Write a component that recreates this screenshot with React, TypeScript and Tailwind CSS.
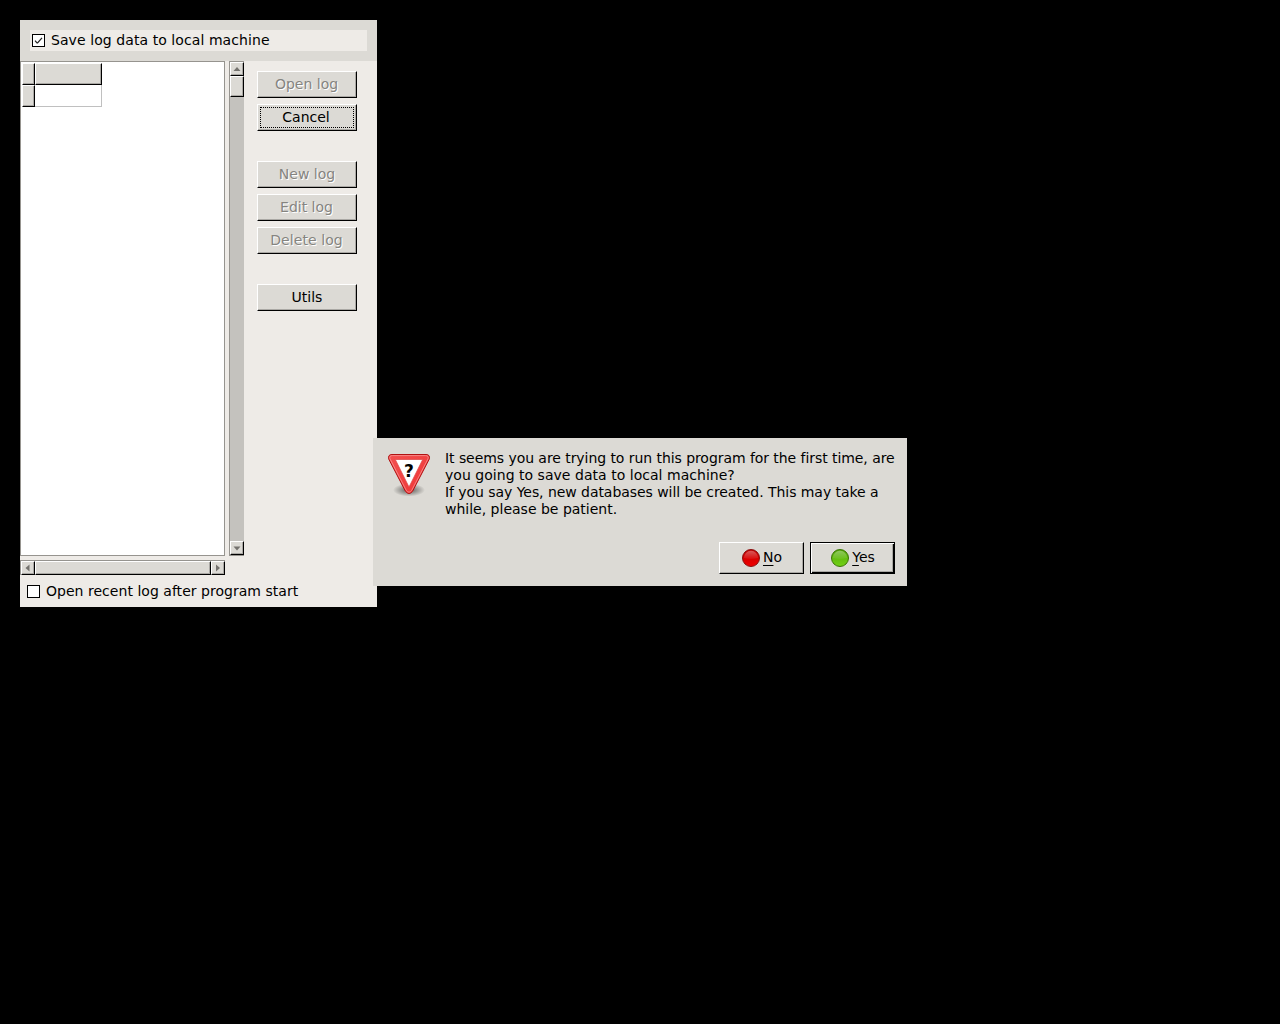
import type { ReactNode } from "react";

const raised =
  "border border-t-white border-l-white border-r-black border-b-black bg-[#dcdad5] shadow-[inset_-1px_-1px_0_#aaa8a4]";

function SideButton({ label, disabled = false, focused = false, className = "", textClass = "" }: { label: string; disabled?: boolean; focused?: boolean; className?: string; textClass?: string }) {
  return (
    <button
      disabled={disabled}
      className={`flex h-[27px] w-[100px] shrink-0 p-[2px] ${raised} ${className}`}
    >
      <span
        className={`flex h-full w-full items-center justify-center border border-dotted leading-[17px] ${focused ? "border-black" : "border-transparent"} ${disabled ? "text-[#858480] [text-shadow:1px_1px_0_#fff]" : "text-black"} ${textClass}`}
      >
        {label}
      </span>
    </button>
  );
}

function Arrow({ points, className = "" }: { points: string; className?: string }) {
  return (
    <span className={`flex h-[14px] w-[14px] shrink-0 items-center justify-center ${raised} ${className}`}>
      <svg width="8" height="8" viewBox="0 0 8 8">
        <polygon points={points} fill="#74726e" />
      </svg>
    </span>
  );
}

function Check({ checked = false }: { checked?: boolean }) {
  return (
    <span className="flex h-[13px] w-[13px] shrink-0 items-center justify-center border border-black bg-white">
      {checked && (
        <svg width="9" height="9" viewBox="0 0 9 9">
          <path d="M1 4.6 L3 7 L3.6 7 L8 1.8" fill="none" stroke="#222" strokeWidth="1.2" />
        </svg>
      )}
    </span>
  );
}

function Ball({ id, light, dark, rim }: { id: string; light: string; dark: string; rim: string }) {
  return (
    <svg width="20" height="20" viewBox="0 0 20 20" className="shrink-0">
      <defs>
        <linearGradient id={id} x1="0" y1="0" x2="0" y2="1">
          <stop offset="0" stopColor={dark} />
          <stop offset="1" stopColor={light} />
        </linearGradient>
        <linearGradient id={id + "g"} x1="0" y1="0" x2="0" y2="1">
          <stop offset="0" stopColor="#fff" stopOpacity="0.35" />
          <stop offset="1" stopColor="#fff" stopOpacity="0.05" />
        </linearGradient>
      </defs>
      <circle cx="10" cy="10" r="8.5" fill={`url(#${id})`} stroke={rim} strokeWidth="1" />
      <path d="M2.8 10 A7.2 7.2 0 0 1 17.2 10 Q10 11.8 2.8 10Z" fill={`url(#${id}g)`} />
    </svg>
  );
}

function DialogButton({ icon, mnemonic, rest, primary = false }: { icon: ReactNode; mnemonic: string; rest: string; primary?: boolean }) {
  return (
    <button
      className={`flex h-[32px] w-[85px] items-center justify-center gap-[2px] ${primary ? "border border-black bg-[#dcdad5] shadow-[inset_1px_1px_0_#fff,inset_-1px_-1px_0_#000,inset_-2px_-2px_0_#aaa8a4]" : raised}`}
    >
      {icon}
      <span className="pb-[2px] leading-[17px]">
        <span className="underline decoration-1 underline-offset-[3px] [text-decoration-skip-ink:none]">{mnemonic}</span>
        {rest}
      </span>
    </button>
  );
}

function WarningIcon() {
  return (
    <svg width="48" height="48" viewBox="0 0 48 48" className="shrink-0">
      <defs>
        <radialGradient id="shade">
          <stop offset="0" stopColor="#000" stopOpacity="0.6" />
          <stop offset="0.5" stopColor="#000" stopOpacity="0.3" />
          <stop offset="1" stopColor="#000" stopOpacity="0" />
        </radialGradient>
        <linearGradient id="sign" x1="0" y1="0" x2="1" y2="1">
          <stop offset="0" stopColor="#f35050" />
          <stop offset="1" stopColor="#ef3535" />
        </linearGradient>
      </defs>
      <ellipse cx="24" cy="40" rx="16" ry="6.5" fill="url(#shade)" />
      <path d="M7 4.5 H41 Q45.4 4.5 44.2 9.2 L27.6 41.2 Q24 45.8 20.4 41.2 L3.8 9.2 Q2.6 4.5 7 4.5Z" fill="url(#sign)" stroke="#b01212" strokeWidth="1" />
      <path d="M7.4 5.6 H40.6 Q44 5.6 43 8.8 L26.6 40.6 Q24 43.8 21.4 40.6 L5 8.8 Q4 5.6 7.4 5.6Z" fill="none" stroke="#f9a0a0" strokeWidth="0.7" />
      <path d="M10.3 9.5 H37.7 L24 37Z" fill="#fff" stroke="#d44" strokeWidth="0.7" strokeLinejoin="round" />
      <text x="24" y="27" textAnchor="middle" fontFamily="DejaVu Sans" fontWeight="700" fontSize="17" fill="#000">?</text>
    </svg>
  );
}

export default function App() {
  return (
    <main className="relative h-[1024px] w-[1280px] overflow-hidden bg-black p-5 text-[14px] leading-[17px] text-black [font-family:'DejaVu_Sans',sans-serif]">
      <section className="flex h-[587px] w-[357px] flex-col bg-[#eeebe7]">
        <header className="h-[41px] bg-[#dcdad5] px-[10px] pt-[10px]">
          <label className="flex h-[21px] items-center gap-[6px] bg-[#eeebe7] pl-[2px]">
            <Check checked />
            <span className="tracking-[0.075px]">Save log data to local machine</span>
          </label>
        </header>
        <div className="flex h-[495px]">
          <div className="w-[205px] border border-[#96948f] bg-white pl-px pt-px">
            <div className="flex h-[22px]">
              <div className={`w-[13px] ${raised}`} />
              <div className={`w-[67px] ${raised}`} />
            </div>
            <div className="flex h-[22px]">
              <div className={`w-[13px] ${raised}`} />
              <div className="w-[67px] border-b border-r border-[#c0c0c0]" />
            </div>
          </div>
          <div className="ml-[4px] flex w-[15px] flex-col border border-r-0 border-[#96948f] bg-[#c4c2be]">
            <Arrow points="0.5,6 7.5,6 4,2" />
            <div className={`h-[21px] w-[14px] ${raised}`} />
            <Arrow points="0.5,2.5 7.5,2.5 4,6.5" className="mt-auto" />
          </div>
          <div className="ml-[13px] flex flex-col gap-[6px] pt-[10px]">
            <SideButton label="Open log" disabled textClass="pr-px" />
            <SideButton label="Cancel" focused textClass="pr-[2px]" />
            <SideButton label="New log" disabled className="mt-6" />
            <SideButton label="Edit log" disabled textClass="pr-px" />
            <SideButton label="Delete log" disabled textClass="pr-px tracking-[0.07px]" />
            <SideButton label="Utils" className="mt-6" />
          </div>
        </div>
        <div className="mt-[4px] flex h-[15px] w-[205px] border-l border-t border-[#96948f] bg-[#c4c2be]">
          <Arrow points="5.5,0.5 5.5,7.5 1.5,4" />
          <div className={`h-[14px] flex-1 ${raised}`} />
          <Arrow points="2,0.5 2,7.5 6,4" />
        </div>
        <label className="mt-[8px] flex items-center gap-[6px] pl-[7px]">
          <Check />
          <span className="tracking-[0.03px]">Open recent log after program start</span>
        </label>
      </section>

      <section role="dialog" className="absolute left-[373px] top-[438px] flex h-[148px] w-[534px] flex-col bg-[#dcdad5] px-3 pt-3">
        <div className="flex gap-3">
          <WarningIcon />
          <p className="whitespace-nowrap">
            <span className="tracking-[-0.06px]">It seems you are trying to run this program for the first time, are</span>
            <br />
            <span className="tracking-[0.03px]">you going to save data to local machine?</span>
            <br />
            <span className="tracking-[-0.055px]">If you say Yes, new databases will be created. This may take a</span>
            <br />
            <span>while, please be patient.</span>
          </p>
        </div>
        <div className="mt-6 flex justify-end gap-[6px]">
          <DialogButton mnemonic="N" rest="o" icon={<Ball id="red" light="#f00000" dark="#c00000" rim="#8a1010" />} />
          <DialogButton primary mnemonic="Y" rest="es" icon={<Ball id="green" light="#73d216" dark="#52a608" rim="#3c7606" />} />
        </div>
      </section>
    </main>
  );
}
